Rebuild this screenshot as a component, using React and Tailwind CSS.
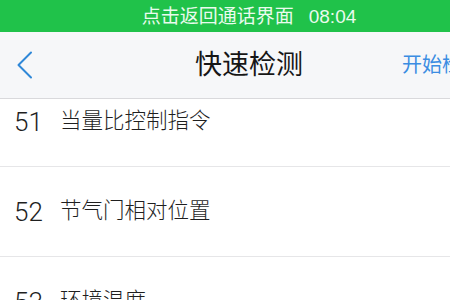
import React from 'react';

const rows = [
  { no: '51', name: '当量比控制指令' },
  { no: '52', name: '节气门相对位置' },
  { no: '53', name: '环境温度' },
];

// 快速检测页 — 原屏宽约 498px，截图只露出左边 450px
export default function App() {
  return (
    <div
      className="w-[450px] h-[300px] overflow-hidden bg-white"
      style={{ fontFamily: '"Liberation Sans", "Noto Sans CJK SC", sans-serif' }}
    >
      <div className="w-[498px]">
        {/* 通话状态条 */}
        <div className="h-[32px] bg-[#20c24a] flex items-center justify-center gap-[15px] text-[#eafbee]">
          <span className="text-[19px] leading-none">点击返回通话界面</span>
          <span className="text-[19px] leading-none">08:04</span>
        </div>

        {/* 导航栏 */}
        <div className="h-[67px] bg-[#f6f7f9] border-b border-[#d9d9dc] grid grid-cols-[1fr_auto_1fr] items-center">
          <div className="pl-[16px] flex items-center">
            <svg width="18" height="30" viewBox="0 0 18 30" fill="none">
              <path d="M15 2.5 L2.5 15 L15 27.5" stroke="#2f88d8" strokeWidth="2" strokeLinecap="round" strokeLinejoin="round" />
            </svg>
          </div>
          <div className="text-[27px] leading-none text-[#161616]">快速检测</div>
          <div className="flex justify-end pr-[16px]">
            <span className="text-[20px] leading-none text-[#3b8de2] whitespace-nowrap">开始检测</span>
          </div>
        </div>

        {/* 列表（已滚动） */}
        <div className="h-[201px] overflow-hidden">
          <div className="-mt-[22px]">
            {rows.map((r) => (
              <div key={r.no} className="h-[90px] border-b border-[#e6e6e8] flex items-center pl-[14px]">
                <span className="w-[46px] text-[26px] leading-none text-[#1f1f1f] font-light font-['Roboto']">{r.no}</span>
                <span className="text-[21.5px] leading-none text-[#1f1f1f] font-light">{r.name}</span>
              </div>
            ))}
          </div>
        </div>
      </div>
    </div>
  );
}
